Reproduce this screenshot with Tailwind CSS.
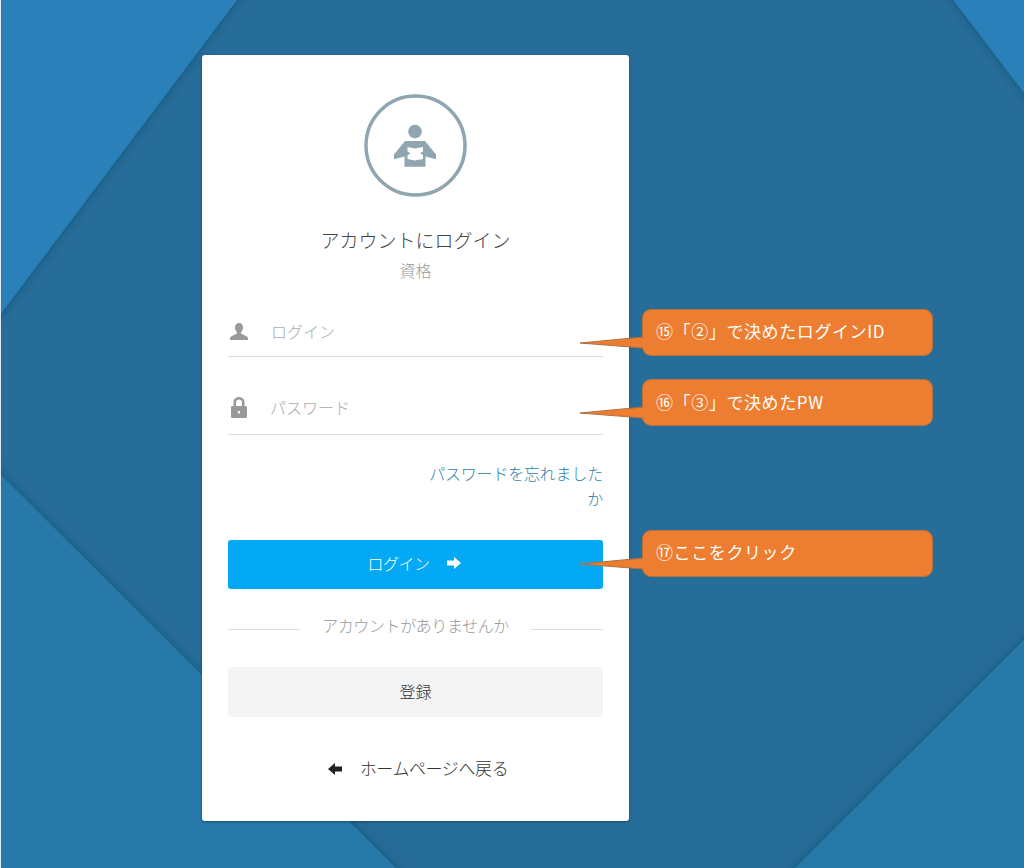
<!DOCTYPE html>
<html lang="ja">
<head>
  <meta charset="UTF-8" />
  <title>アカウントにログイン</title>
  <script src="https://cdn.jsdelivr.net/npm/@tailwindcss/browser@4"></script>
</head>
<body class="bg-[#266d99] font-['Noto_Sans_CJK_JP',sans-serif]">
  <div class="relative w-[1024px] h-[868px] overflow-hidden pt-[55px] pl-[202px]">

    <!-- Background -->
    <svg class="absolute left-0 top-0" width="1024" height="868" viewBox="0 0 1024 868">
      <defs>
        <filter id="sombra" x="-20%" y="-20%" width="140%" height="140%">
          <feDropShadow dx="0" dy="0" stdDeviation="5" flood-color="#123f5c" flood-opacity="0.55" />
        </filter>
      </defs>
      <polygon points="-20,-20 252,-20 0,315 -20,340" fill="#2a80b8" filter="url(#sombra)" />
      <polygon points="-20,454 415,887 -20,887" fill="#2879a8" filter="url(#sombra)" />
      <polygon points="1044,620 1044,888 775,888" fill="#2879a8" filter="url(#sombra)" />
      <polygon points="938,-20 1044,-20 1044,119" fill="#2a80b8" filter="url(#sombra)" />
      <rect x="0" y="0" width="1" height="868" fill="#dfe9ef" />
    </svg>

    <!-- Login card -->
    <main class="relative w-[427px] h-[766px] bg-white rounded-[3px] px-[26px] pt-[39px] shadow-[0_1px_3px_rgba(0,0,0,0.3)]">
      <div class="flex justify-center">
        <svg width="103" height="103" viewBox="364 94 103 103">
          <circle cx="415.5" cy="145.5" r="49.5" fill="none" stroke="#8fa5b0" stroke-width="3.5" />
          <circle cx="415" cy="131.500" r="6.800" fill="#8fa5b0" />
          <polygon points="405,141 425,141 436,154.500 436,159.300 425.500,156.500 425.500,166.800 404.500,166.800 404.500,156.500 394,159.300 394,154.500" fill="#8fa5b0" />
          <path d="M407.500 147 L415 148.500 L423 147 V151.500 L420 153 L423 155 V159 L415 160.500 L407.500 159 V155 L410.500 153.500 L407.500 151.500 Z" fill="#fff" />
        </svg>
      </div>

      <h1 class="mt-[29px] text-center text-[19px] leading-[28px] font-light text-[#444]">アカウントにログイン</h1>
      <p class="mt-[4px] text-center text-[16px] leading-[24px] font-light text-[#999]">資格</p>

      <!-- Fields -->
      <div class="mt-[24px] h-[51px] flex items-center border-b border-[#ddd]">
        <svg class="ml-[2px] mt-[2px] w-[18px] h-[18px]" viewBox="0 0 18 18" fill="#999">
          <path d="M9 0c2.600 0 4 1.900 4 4.400 0 1.800-.8 3.500-1.800 4.500-.4.500-.4 1.400.3 1.800l4.500 2.300c1.200.6 2 1.300 2 2.500v1.500H0v-1.500c0-1.200.8-1.900 2-2.500l4.500-2.300c.7-.4.700-1.300.3-1.800C5.800 7.900 5 6.200 5 4.400 5 1.900 6.400 0 9 0z" />
        </svg>
        <span class="ml-[23px] text-[16px] font-light text-[#aaa]">ログイン</span>
      </div>
      <div class="mt-[26px] h-[52px] flex items-center border-b border-[#ddd] pb-[4px]">
        <svg class="ml-[3px] mt-[2px] w-[16px] h-[21px]" viewBox="0 0 16 21" fill="#999">
          <path fill-rule="evenodd" d="M8 0c3.300 0 5.500 2.300 5.500 5.500V9h1c.8 0 1.500.7 1.500 1.500v9c0 .8-.7 1.500-1.500 1.500h-13C.7 21 0 20.300 0 19.500v-9C0 9.700.7 9 1.500 9h1V5.500C2.500 2.300 4.700 0 8 0zm0 2.500c-1.800 0-3 1.200-3 3V9h6V5.500c0-1.800-1.200-3-3-3zM8 14a1.300 1.300 0 1 0 0 2.600A1.300 1.300 0 0 0 8 14z" />
        </svg>
        <span class="ml-[23px] text-[16px] font-light text-[#aaa]">パスワード</span>
      </div>

      <a class="block ml-auto mt-[26px] w-[176px] text-right text-[16px] leading-[25px] tracking-[-0.2px] font-light text-[#2f7fab]">パスワードを忘れましたか</a>

      <!-- Actions -->
      <button class="mt-[29px] w-full h-[49px] pb-[3px] pr-[3px] rounded-[3px] bg-[#03a9f4] text-white text-[16px] tracking-[-0.5px] font-light flex items-center justify-center gap-[17px]">
        <span>ログイン</span>
        <svg width="14" height="12" viewBox="0 0 14 12" fill="#fff"><path d="M7 0l7 6-7 6V8.500H0v-5h7z" /></svg>
      </button>

      <div class="mt-[24px] flex items-center">
        <span class="w-[72px] h-px bg-[#ddd] mt-[8px]"></span>
        <span class="flex-1 text-center text-[16px] leading-[24px] font-light text-[#999] tracking-[-0.4px]">アカウントがありませんか</span>
        <span class="w-[72px] h-px bg-[#ddd] mt-[8px]"></span>
      </div>

      <button class="mt-[30px] w-full h-[50px] pb-[2px] rounded-[3px] bg-[#f4f4f4] text-[16px] font-light text-[#333]">登録</button>

      <a class="mt-[38px] pl-[5px] flex items-center justify-center gap-[18px] text-[17px] tracking-[-0.4px] leading-[26px] font-light text-[#333]">
        <svg class="mt-[2px]" width="14" height="12" viewBox="0 0 14 12" fill="#222"><path d="M7 0L0 6l7 6V8.500h7v-5H7z" /></svg>
        <span>ホームページへ戻る</span>
      </a>
    </main>

    <!-- Callouts -->
    <div class="absolute left-[642px] top-[309px] w-[291px] h-[47px] rounded-[9px] bg-[#ed7d31] border border-[#b8713a] pl-[13px] pb-[3px] flex items-center text-white text-[17px] tracking-[0.6px]">⑮「②」で決めたログインID</div>
    <svg class="absolute left-[578px] top-[330px]" width="68" height="26" viewBox="578 330 68 26">
      <polygon points="645,337 580,343 645,348" fill="#ed7d31" />
      <polyline points="643,337 580,343 643,348" fill="none" stroke="#b0703c" stroke-width="1" />
    </svg>

    <div class="absolute left-[642px] top-[379px] w-[291px] h-[47px] rounded-[9px] bg-[#ed7d31] border border-[#b8713a] pl-[13px] pb-[2px] flex items-center text-white text-[17px] tracking-[0.6px]">⑯「③」で決めたPW</div>
    <svg class="absolute left-[578px] top-[400px]" width="68" height="26" viewBox="578 400 68 26">
      <polygon points="645,407 580,413 645,418" fill="#ed7d31" />
      <polyline points="643,407 580,413 643,418" fill="none" stroke="#b0703c" stroke-width="1" />
    </svg>

    <div class="absolute left-[642px] top-[530px] w-[291px] h-[47px] rounded-[9px] bg-[#ed7d31] border border-[#b8713a] pl-[13px] pb-[4px] flex items-center text-white text-[17px] tracking-[0.6px]">⑰ここをクリック</div>
    <svg class="absolute left-[578px] top-[552px]" width="68" height="26" viewBox="578 552 68 26">
      <polygon points="645,558 580,564 645,569" fill="#ed7d31" />
      <polyline points="643,558 580,564 643,569" fill="none" stroke="#b0703c" stroke-width="1" />
    </svg>
  </div>
</body>
</html>
